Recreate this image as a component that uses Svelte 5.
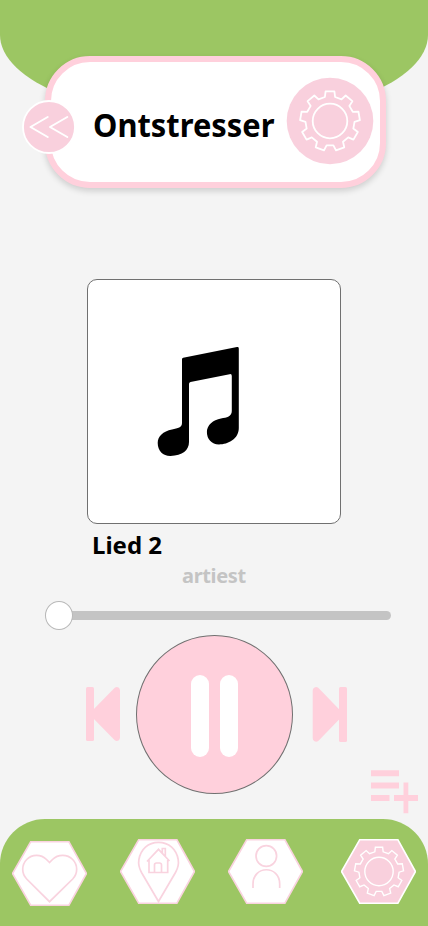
<script>
  let title = 'Ontstresser';
  let song = 'Lied 2';
  let artist = 'artiest';

  // Nine-toothed cog outline centred on the origin.
  function cog() {
    const tooth = [[-5.1, -24], [-4.4, -29.6], [4.4, -29.6], [5.1, -24]];
    const pts = [];
    for (let i = 0; i < 9; i++) {
      const a = (i * 40 * Math.PI) / 180;
      for (const [x, y] of tooth) {
        const px = x * Math.cos(a) - y * Math.sin(a);
        const py = x * Math.sin(a) + y * Math.cos(a);
        pts.push(px.toFixed(2) + ' ' + py.toFixed(2));
      }
    }
    return 'M' + pts.join('L') + 'Z';
  }
  const cogPath = cog();
  const hex = '18.8,.7 56.8,.7 74.5,32.5 56.8,64.3 18.8,64.3 .5,32.5';
</script>

<main>
  <header>
    <div class="card">
      <button class="back" aria-label="Terug">
        <svg width="54" height="54" viewBox="0 0 54 54">
          <circle cx="27" cy="27" r="26" fill="#f9d0dd" stroke="#fff" stroke-width="1.8" />
          <path d="M25.7 17 8.5 27l17.2 10M45.3 17 28 27l17.3 10" fill="none" stroke="#fff" stroke-width="2" stroke-linecap="round" stroke-linejoin="round" />
        </svg>
      </button>
      <h1>{title}</h1>
      <button class="settings" aria-label="Instellingen">
        <svg width="88" height="88" viewBox="-44 -44 88 88">
          <circle r="43.3" fill="#f9d0dd" />
          <g fill="none" stroke="#fff" stroke-width="1.8" stroke-linejoin="round">
            <path d={cogPath} />
            <circle r="17.3" />
          </g>
        </svg>
      </button>
    </div>
  </header>

  <section class="player">
    <div class="cover">
      <svg width="84" height="111" viewBox="157 346 84 111">
        <path d="M182 359.2Q182 358 183.2 357.8L237 347.1Q238.8 346.8 238.8 348.5V428C238.8 439 228 444.4 219 444.4C211.500 444.400 206.900 439 206.900 432C206.900 425 213 420 221 418.500C227 417.500 231.800 416.500 231.800 411V376Q231.800 373.700 229.600 374.200L190.500 382Q189 382.400 189 384V442C189 450 182.500 455.800 170.500 455.900C163 456 157.700 451 157.700 443C157.700 436 163 431.500 172 429.500C178 428.300 182 427.500 182 423Z" />
      </svg>
    </div>
    <h2>{song}</h2>
    <p>{artist}</p>
    <div class="slider"><span class="thumb"></span></div>
    <div class="controls">
      <button class="skip" aria-label="Vorige">
        <svg width="35" height="56" viewBox="0 0 35 56">
          <rect x="0" y="1" width="8" height="54" rx="1.500" />
          <path d="M7 24 28.500 2Q30.500.300 32.500 1.500Q34 2.400 34 4.500V51.500Q34 53.600 32.500 54.500Q30.500 55.700 28.500 54L7 32Z" />
        </svg>
      </button>
      <button class="pause" aria-label="Pauze">
        <span></span><span></span>
      </button>
      <button class="skip" aria-label="Volgende">
        <svg width="35" height="56" viewBox="0 0 35 56">
          <rect x="27" y="1" width="8" height="55" rx="1.500" />
          <path d="M28 24.300 6.500 2Q4.500.300 2.500 1.500Q.700 2.400.700 4.500V52Q.700 54.400 2.500 55.300Q4.500 56.500 6.500 54.700L28 32.500Z" />
        </svg>
      </button>
    </div>
  </section>

  <div class="queue">
    <button aria-label="Toevoegen">
      <svg width="48" height="44" viewBox="0 0 48 44">
        <path d="M1 .2h28v6H1zM1 12.500h28v6H1zM1 25h18.500v6H1zM24 25h9.500V12.500h4.800V25H48v6h-9.700v12.200h-4.800V31H24z" />
      </svg>
    </button>
  </div>

  <nav>
    <svg class="heart" width="75" height="65" viewBox="0 0 75 65">
      <polygon points={hex} />
      <path d="M37.500 21.500 34.500 18.500C29 13 20 13.100 14.700 18.500C9.400 24 9.400 32.500 14.700 38L37.500 60.700 60.700 38C66 32.500 66 24 60.700 18.500C55.400 13.100 46 13 40.500 18.500Z" />
    </svg>
    <svg class="home" width="75" height="65" viewBox="0 0 75 65">
      <polygon points={hex} />
      <path d="M38.500 62.500 21.500 33.500C18.500 28 18.300 24 18.900 20.500C20.700 10.500 28 3.300 38.500 3.300C49 3.300 56.500 10.500 58.200 20.500C58.800 24 58.300 28.500 55.500 33.500Z" />
      <path d="M27 22.500 38.500 10.300 49.500 22M29 21V33.500H47.700V21M34.500 33.500V26Q34.500 24 36.500 24H39.500Q41.500 24 41.500 26V33.500M42.300 14V9.500H45.300V17" />
    </svg>
    <svg class="profile" width="75" height="65" viewBox="0 0 75 65">
      <polygon points={hex} />
      <circle cx="38.300" cy="17" r="10.300" />
      <path d="M25 49V45C25 26 51.700 26 51.700 45V49" />
    </svg>
    <svg class="active" width="75" height="65" viewBox="0 0 75 65">
      <polygon points={hex} />
      <g transform="translate(38 32.500) scale(.82)">
        <path d={cogPath} />
        <circle r="17.300" />
      </g>
    </svg>
  </nav>
</main>

<style>
  :global(body) { margin: 0; }
  main {
    width: 428px;
    height: 926px;
    display: flex;
    flex-direction: column;
    overflow: hidden;
    background: #f4f4f4;
    font-family: "Noto Sans", "Open Sans", sans-serif;
  }
  button {
    display: block;
    padding: 0;
    border: 0;
    background: none;
  }
  svg { display: block; }
  h1, h2, p { margin: 0; font-weight: 700; white-space: nowrap; }
  header {
    box-sizing: border-box;
    height: 120px;
    flex: none;
    padding: 56px 0 0 45px;
    background: #9cc663;
    border-radius: 0 0 50% 50% / 0 0 85px 85px;
  }
  .card {
    position: relative;
    box-sizing: border-box;
    width: 341px;
    height: 132px;
    display: flex;
    align-items: center;
    justify-content: space-between;
    padding: 0 6px 2px 42px;
    background: #fff;
    border: 6px solid #ffd0dc;
    border-radius: 45px;
    box-shadow: 0 3px 6px rgba(0, 0, 0, .16);
  }
  .back { position: absolute; left: -29px; top: 38px; }
  h1 {
    width: 193px;
    font-size: 33px;
    line-height: 44px;
    padding-top: 8px;
    transform: scaleX(.935);
    transform-origin: left;
  }
  .settings { flex: none; }
  .player {
    flex: none;
    display: flex;
    flex-direction: column;
    padding: 159px 37px 0 45px;
  }
  .cover {
    box-sizing: border-box;
    width: 254px;
    height: 245px;
    margin-left: 42px;
    padding: 66px 0 0 69px;
    background: #fff;
    border: 1px solid #707070;
    border-radius: 10px;
  }
  h2 { margin: 5px 0 0 47px; font-size: 24px; line-height: 32px; }
  p { margin: 1px 0 0 137px; font-size: 20px; line-height: 28px; letter-spacing: -.35px; color: #c4c4c4; }
  .slider {
    display: flex;
    align-items: center;
    height: 9px;
    margin-top: 21px;
    border-radius: 5px;
    background: #c4c4c4;
  }
  .thumb {
    box-sizing: border-box;
    width: 28px;
    height: 29px;
    flex: none;
    border: 1px solid #b8b8b8;
    border-radius: 50%;
    background: #fff;
  }
  .controls {
    display: flex;
    align-items: center;
    margin: 15px 0 0 41px;
    fill: #ffd0dc;
  }
  .skip { padding-bottom: 1px; }
  .pause {
    box-sizing: border-box;
    width: 157px;
    height: 159px;
    margin: 0 19px 0 15px;
    display: flex;
    align-items: center;
    justify-content: center;
    gap: 11px;
    padding-top: 3px;
    background: #ffd0dc;
    border: 1px solid #707070;
    border-radius: 50%;
  }
  .pause span { width: 18px; height: 82px; border-radius: 9px; background: #fff; }
  .queue {
    flex: none;
    display: flex;
    justify-content: flex-end;
    margin-top: -24px;
    padding: 0 10px 5px 0;
    fill: #ffd0dc;
  }
  nav {
    box-sizing: border-box;
    height: 107px;
    flex: none;
    display: flex;
    align-items: flex-start;
    padding: 20px 0 0 12px;
    background: #9cc663;
    border-radius: 45px 45px 0 0;
  }
  nav svg { fill: #fff; stroke: #f9d3df; stroke-width: 1.7; }
  nav path { fill: none; }
  .heart { margin-top: 1.5px; }
  .home, .profile { margin-left: 33px; }
  nav .active { margin-left: 38px; fill: #f9d0dd; stroke: #fff; }
</style>
